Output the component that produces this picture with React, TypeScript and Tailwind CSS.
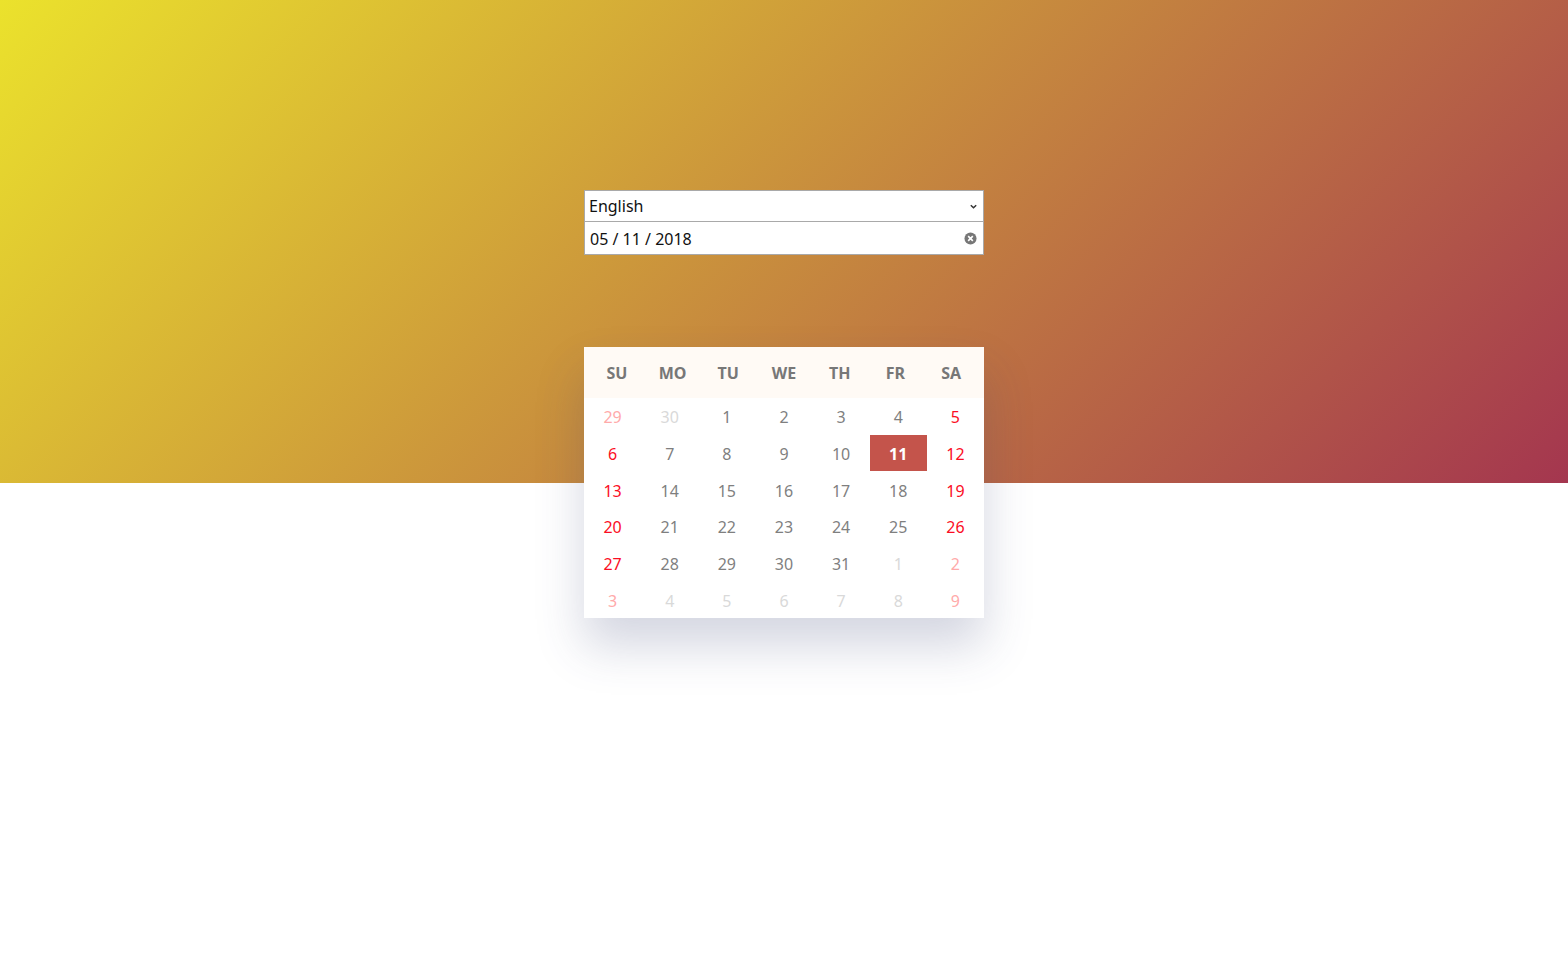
import React from "react";

type Day = { n: number; kind: "prev" | "cur" | "next" };

const weeks: Day[][] = (() => {
  const days: Day[] = [];
  days.push({ n: 29, kind: "prev" }, { n: 30, kind: "prev" });
  for (let i = 1; i <= 31; i++) days.push({ n: i, kind: "cur" });
  for (let i = 1; i <= 9; i++) days.push({ n: i, kind: "next" });
  const w: Day[][] = [];
  for (let i = 0; i < 6; i++) w.push(days.slice(i * 7, i * 7 + 7));
  return w;
})();

function dayClass(d: Day, col: number, selected: boolean) {
  if (selected) return "bg-[#c4544b] text-white font-bold";
  const weekend = col === 0 || col === 6;
  if (d.kind !== "cur") return weekend ? "text-[#ffaaaa]" : "text-[#d9d9d9]";
  return weekend ? "text-[#fb0d24]" : "text-[#7f7f7f]";
}

export default function App() {
  const heads = ["SU", "MO", "TU", "WE", "TH", "FR", "SA"];
  return (
    <div
      className="relative w-full min-h-[966px] bg-white"
      style={{ fontFamily: '"Noto Sans", "Open Sans", sans-serif' }}
    >
      <div className="h-[483px] w-full bg-[linear-gradient(135deg,#ebe22c,#a4364f)]" />
      <div className="absolute left-0 right-0 top-[190px] flex flex-col items-center">
        <div className="w-[400px]">
          <div className="h-[32px] bg-white border border-[#a9a9a9] flex items-center justify-between pl-[4px] pr-[5px] text-[16px] text-[#111]">
            <span>English</span>
            <svg width="9" height="9" viewBox="0 0 10 10">
              <path d="M2 3.5 L5 6.5 L8 3.5" stroke="#333" strokeWidth="1.6" fill="none" />
            </svg>
          </div>
          <div className="h-[33px] bg-white border border-[#a9a9a9] border-t-0 flex items-center justify-between pl-[5px] pr-[6px] text-[16px] text-[#111]">
            <span className="pt-[1px]">05 / 11 / 2018</span>
            <svg width="13" height="13" viewBox="0 0 14 14">
              <circle cx="7" cy="7" r="6.5" fill="#777" />
              <path d="M4.5 4.5 L9.5 9.5 M9.5 4.5 L4.5 9.5" stroke="#fff" strokeWidth="1.8" />
            </svg>
          </div>
        </div>
        <div className="mt-[92px] w-[400px] bg-white shadow-[0_28px_45px_rgba(60,70,120,0.22)]">
          <div className="h-[51px] bg-[#fffaf5] px-[5px] grid grid-cols-7 items-center">
            {heads.map((h) => (
              <div key={h} className="text-center text-[16px] font-bold text-[#777]">
                {h}
              </div>
            ))}
          </div>
          <div className="flex flex-col">
            {weeks.map((w, ri) => (
              <div key={ri} className="grid grid-cols-7 h-[36.67px]">
                {w.map((d, ci) => {
                  const sel = d.kind === "cur" && d.n === 11;
                  return (
                    <div
                      key={ci}
                      className={`flex items-center justify-center pt-[2px] text-[16px] ${dayClass(d, ci, sel)}`}
                    >
                      {d.n}
                    </div>
                  );
                })}
              </div>
            ))}
          </div>
        </div>
      </div>
    </div>
  );
}
